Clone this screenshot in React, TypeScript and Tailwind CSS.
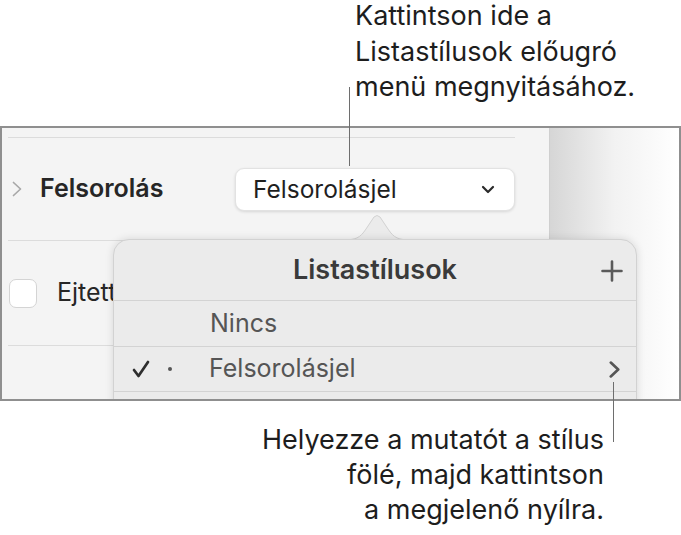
const font = { fontFamily: 'Inter, "Noto Sans", sans-serif' };

function ChevronRight({ className, width = 2 }: { className?: string; width?: number }) {
    return (
        <svg viewBox="0 0 10 16" className={className} fill="none" stroke="currentColor" strokeWidth={width} strokeLinecap="round" strokeLinejoin="round">
            <path d="M1.5 1.5L8.5 8l-7 6.5" />
        </svg>
    );
}

function ChevronDown({ className }: { className?: string }) {
    return (
        <svg viewBox="0 0 14 9" className={className} fill="none" stroke="currentColor" strokeWidth="2.2" strokeLinecap="round" strokeLinejoin="round">
            <path d="M2 2l5 5 5-5" />
        </svg>
    );
}

function Check({ className }: { className?: string }) {
    return (
        <svg viewBox="0 0 18 18" className={className} fill="none" stroke="currentColor" strokeWidth="2.7" strokeLinecap="round" strokeLinejoin="round">
            <path d="M2 10l4.5 6L16 2" />
        </svg>
    );
}

function PlusIcon({ className }: { className?: string }) {
    return (
        <svg viewBox="0 0 22 22" className={className} fill="none" stroke="currentColor" strokeWidth="2.6" strokeLinecap="round">
            <path d="M11 1.5v19M1.5 11h19" />
        </svg>
    );
}

export default function App() {
    return (
        <div className="relative w-[681px] h-[535px] bg-white overflow-hidden text-[#1d1d1d]" style={font}>
            {/* top callout */}
            <div className="flow-root h-[126px] pl-[355px] text-[27px] leading-[35.5px]">
                <p className="-mt-[2px]">Kattintson ide a</p>
                <p>Listastílusok előugró</p>
                <p>menü megnyitásához.</p>
            </div>

            {/* screenshot */}
            <div className="relative h-[275px] border-2 border-[#8f8f8f] overflow-hidden flex">
                <div className="w-[547px] bg-[#f4f4f4] pl-[6px]">
                    <div className="mt-[9px] w-[507px] h-px bg-[#dcdcdc]" />
                    <div className="h-[102px] flex items-center">
                        <div className="w-[32px] pl-[4px]">
                            <ChevronRight className="w-[10px] h-[16px] text-[#a8a8a8]" width={1.7} />
                        </div>
                        <span className="w-[195px] text-[25px] font-semibold text-[#262626]">Felsorolás</span>
                        <div className="w-[280px] h-[43px] bg-white rounded-[9px] border border-[#e2e2e2] shadow-[0_1px_3px_rgba(0,0,0,0.12)] flex items-center justify-between pl-[17px] pr-[19px]">
                            <span className="text-[24.5px] text-[#1f1f1f]">Felsorolásjel</span>
                            <ChevronDown className="w-[14px] h-[9px] text-[#2a2a2a]" />
                        </div>
                    </div>
                    <div className="w-[507px] h-px bg-[#dcdcdc]" />
                    <div className="h-[104px] flex items-center">
                        <div className="ml-px w-[28px] h-[29px] bg-white rounded-[7px] border border-[#d4d4d4]" />
                        <span className="ml-[20px] text-[25px] text-[#262626]">Ejtett iniciálé</span>
                    </div>
                    <div className="w-[507px] h-px bg-[#dcdcdc]" />
                </div>
                <div className="flex-1 border-l border-[#cfcfcf] bg-gradient-to-r from-[#d6d6d6] via-[#f2f2f2] to-white" />

                {/* popover */}
                <div className="absolute left-[111px] top-[111px] w-[524px] h-[200px]">
                    <svg className="absolute left-[229px] -top-[24px] w-[70px] h-[26px]" viewBox="0 0 70 26">
                        <path d="M0 25 C14 25 18 23 24 14 L32 2 Q35 -1 38 2 L46 14 C52 23 56 25 70 25" fill="#ebebeb" stroke="#d2d2d2" strokeWidth="1" />
                    </svg>
                    <div className="relative h-full bg-[#ebebeb] rounded-t-[16px] border border-[#d2d2d2] shadow-[0_0_8px_rgba(0,0,0,0.12)]">
                        <div className="h-[60px] flex items-center justify-center relative">
                            <span className="text-[27px] font-semibold text-[#3a3a3a]">Listastílusok</span>
                            <PlusIcon className="absolute right-[13px] top-[20px] w-[22px] h-[22px] text-[#5a5a5a]" />
                        </div>
                        <div className="h-px bg-[#d3d3d3]" />
                        <div className="h-[45px] flex items-center pl-[96px]">
                            <span className="text-[25px] text-[#555]">Nincs</span>
                        </div>
                        <div className="h-px bg-[#d3d3d3]" />
                        <div className="h-[44px] flex items-center">
                            <Check className="ml-[18px] w-[18px] h-[18px] text-[#2e2e2e]" />
                            <span className="ml-[18px] w-[4px] h-[4px] rounded-full bg-[#555]" />
                            <span className="ml-[37px] text-[25px] text-[#555]">Felsorolásjel</span>
                            <ChevronRight className="ml-auto mr-[16px] w-[11px] h-[17px] text-[#555]" width={2.5} />
                        </div>
                        <div className="h-px bg-[#d3d3d3]" />
                    </div>
                </div>
            </div>

            {/* bottom callout */}
            <div className="w-[604px] mt-[21px] text-right text-[27px] leading-[35px]">
                <p>Helyezze a mutatót a stílus</p>
                <p>fölé, majd kattintson</p>
                <p>a megjelenő nyílra.</p>
            </div>

            {/* leader lines */}
            <div className="absolute left-[349px] top-[87px] w-px h-[79px] bg-[#6e6e6e]" />
            <div className="absolute left-[613px] top-[382px] w-px h-[60px] bg-[#6e6e6e]" />
        </div>
    );
}
